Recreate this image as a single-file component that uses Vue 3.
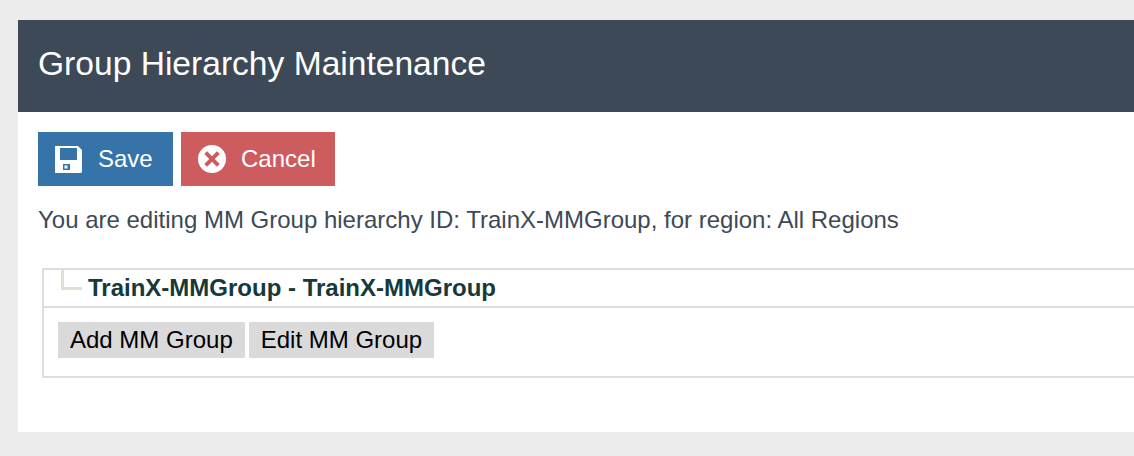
<script setup>
const title = 'Group Hierarchy Maintenance'
</script>

<template>
  <div class="page">
    <div class="panel">
      <header class="head"><h1>{{ title }}</h1></header>
      <div class="body">
        <div class="actions">
          <button class="btn save">
            <svg class="ico" width="27" height="27" viewBox="0 0 27 27">
              <path fill="#fff" fill-rule="evenodd" d="M0 0H23L27 4V26L26 27H0ZM5 2V14H22V2ZM8 18V24H15V18Z" />
              <rect x="9.5" y="19.5" width="3" height="3" fill="#fff" />
            </svg>
            <span>Save</span>
          </button>
          <button class="btn cancel">
            <svg class="ico" width="28" height="28" viewBox="0 0 28 28">
              <circle cx="14" cy="14" r="14" fill="#fff" />
              <path d="M7.7 7.7L20.3 20.3M20.3 7.7L7.7 20.3" stroke="#cd5c5f" stroke-width="4" stroke-linecap="butt" />
            </svg>
            <span>Cancel</span>
          </button>
        </div>
        <p class="note">You are editing MM Group hierarchy ID: TrainX-MMGroup, for region: All Regions</p>
        <div class="tree">
          <div class="node">
            <span class="elbow"></span>
            <strong>TrainX-MMGroup - TrainX-MMGroup</strong>
          </div>
          <div class="ops">
            <button class="op">Add MM Group</button>
            <button class="op">Edit MM Group</button>
          </div>
        </div>
      </div>
    </div>
  </div>
</template>

<style>
html, body { margin: 0; background: #ececec; }
</style>

<style scoped>
.page {
  width: 1134px;
  height: 456px;
  overflow: hidden;
  box-sizing: border-box;
  padding: 20px 0 0 18px;
  background: #ececec;
  font-family: "Liberation Sans", Arial, sans-serif;
}
.panel {
  width: 1200px;
  height: 412px;
  background: #fff;
}
.head {
  height: 92px;
  display: flex;
  align-items: center;
  padding: 0 0 4px 20px;
  box-sizing: border-box;
  background: #3d4957;
}
h1 {
  margin: 0;
  font-size: 33.6px;
  font-weight: 400;
  color: #fff;
}
.body { padding: 20px 0 0 20px; }
.actions { display: flex; gap: 8px; }
.btn {
  height: 54px;
  display: flex;
  align-items: center;
  border: 0;
  padding: 0;
  color: #fff;
  font: 24px "Liberation Sans", Arial, sans-serif;
}
.save { width: 135px; padding-left: 17px; gap: 16px; background: #3673a8; }
.cancel { width: 154px; padding-left: 17px; gap: 15px; background: #cd5c5f; }
.ico { display: block; flex: none; }
.note {
  margin: 21px 0 0;
  font-size: 24px;
  line-height: 26px;
  color: #3d4957;
}
.tree {
  width: 1200px;
  height: 110px;
  box-sizing: border-box;
  margin: 35px 0 0 4px;
  border: 2px solid #ddd;
}
.node {
  height: 36px;
  display: flex;
  align-items: center;
  border-bottom: 2px solid #ddd;
}
.elbow {
  width: 21px;
  height: 20px;
  margin: -16px 6px 0 17px;
  box-sizing: border-box;
  border-left: 3px solid #e0dfd5;
  border-bottom: 3px solid #e0dfd5;
}
strong {
  font-size: 24px;
  color: #17393a;
}
.ops { display: flex; gap: 4px; padding: 14px 0 0 14px; }
.op {
  height: 36px;
  padding: 0 12px;
  border: 0;
  background: #dadada;
  color: #000;
  font: 24px "Liberation Sans", Arial, sans-serif;
}
</style>
